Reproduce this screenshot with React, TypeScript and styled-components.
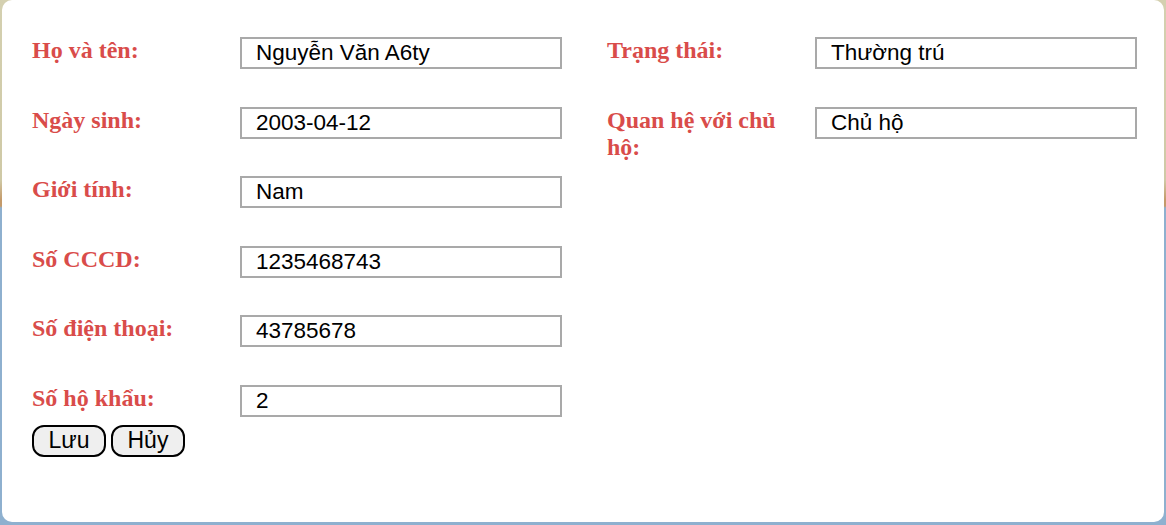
import React from "react";
import styled, { createGlobalStyle } from "styled-components";

const Global = createGlobalStyle`
  html, body {
    margin: 0;
    padding: 0;
  }
  body {
    background: linear-gradient(to bottom, #d4d0b0 0px, #cfc9a6 180px, #c49a6a 200px, #c49a6a 206px, #8eb0cf 208px, #8eb0cf 100%);
    font-family: "Liberation Sans", Arial, sans-serif;
  }
`;

const Page = styled.div`
  height: 525px;
  padding: 0 2px 3px 2px;
  box-sizing: border-box;
`;

const Card = styled.div`
  height: 522px;
  background: #ffffff;
  border-radius: 10px;
  box-sizing: border-box;
  padding: 37px 27px 0 30px;
`;

const Columns = styled.div`
  display: grid;
  grid-template-columns: 530px 530px;
  column-gap: 45px;
  align-items: start;
`;

const Column = styled.div`
  display: flex;
  flex-direction: column;
  gap: 37.6px;
`;

const Row = styled.div`
  display: grid;
  grid-template-columns: 208px 322px;
  align-items: start;
  min-height: 32px;
`;

const Label = styled.label`
  font-family: "Liberation Serif", "Times New Roman", serif;
  font-weight: bold;
  font-size: 24px;
  line-height: 27.6px;
  color: #d94c4a;
  padding-right: 20px;
`;

const Input = styled.input`
  box-sizing: border-box;
  width: 322px;
  height: 32px;
  border: 2px solid #a9a9a9;
  border-radius: 0;
  padding: 0 14px;
  font-family: "Liberation Sans", Arial, sans-serif;
  font-size: 22.5px;
  color: #000;
  background: #fff;
  outline: none;
`;

const Buttons = styled.div`
  display: flex;
  gap: 5px;
  margin-top: 8px;
`;

const Button = styled.button`
  box-sizing: border-box;
  height: 32px;
  padding: 0 14.5px;
  border: 2px solid #000;
  border-radius: 12px;
  background: #efefef;
  font-family: "Liberation Sans", Arial, sans-serif;
  font-size: 23px;
  color: #000;
  cursor: pointer;
`;

type Field = { label: string; value: string };

const left: Field[] = [
  { label: "Họ và tên:", value: "Nguyễn Văn A6ty" },
  { label: "Ngày sinh:", value: "2003-04-12" },
  { label: "Giới tính:", value: "Nam" },
  { label: "Số CCCD:", value: "1235468743" },
  { label: "Số điện thoại:", value: "43785678" },
  { label: "Số hộ khẩu:", value: "2" },
];

const right: Field[] = [
  { label: "Trạng thái:", value: "Thường trú" },
  { label: "Quan hệ với chủ hộ:", value: "Chủ hộ" },
];

const FieldRow = ({ f }: { f: Field }) => (
  <Row>
    <Label>{f.label}</Label>
    <Input defaultValue={f.value} />
  </Row>
);

export default function App() {
  return (
    <>
      <Global />
      <Page>
        <Card>
          <Columns>
            <Column>
              {left.map((f) => (
                <FieldRow key={f.label} f={f} />
              ))}
            </Column>
            <Column>
              {right.map((f) => (
                <FieldRow key={f.label} f={f} />
              ))}
            </Column>
          </Columns>
          <Buttons>
            <Button>Lưu</Button>
            <Button>Hủy</Button>
          </Buttons>
        </Card>
      </Page>
    </>
  );
}
